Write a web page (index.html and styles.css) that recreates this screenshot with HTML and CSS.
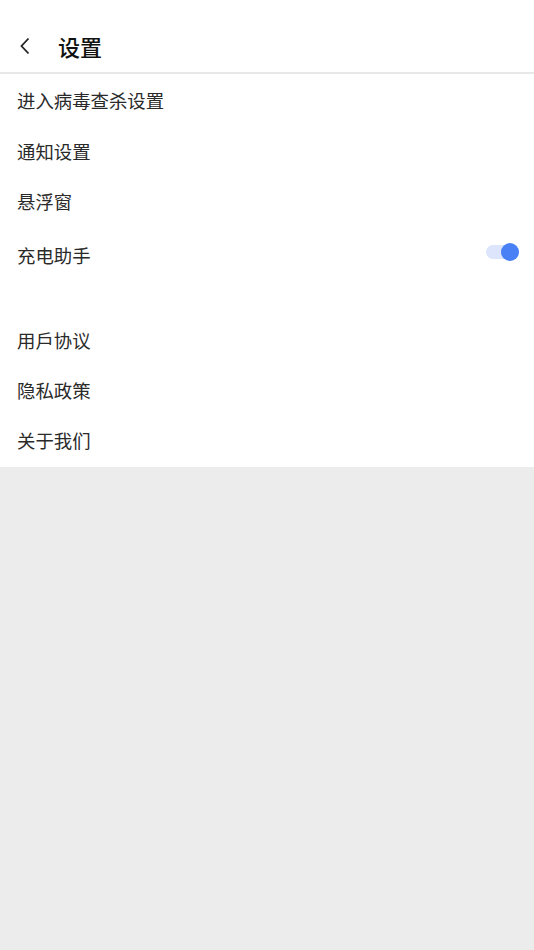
FILE: index.html
```html
<!DOCTYPE html>
<html>
  <head>
    <title>设置</title>
    <meta name="viewport" content="width=device-width, initial-scale=1.0" />
    <link rel="stylesheet" href="styles.css">
  </head>
  <body>
    <div class="page">
      <div class="header">
        <svg class="back" width="14" height="18" viewBox="0 0 14 18">
          <path d="M10.5 1.5 L3.5 9 L10.5 16.5" fill="none" stroke="#222" stroke-width="1.8" />
        </svg>
        <h1 class="title">设置</h1>
      </div>
      <div class="list">
        <div class="item">进入病毒查杀设置</div>
        <div class="item">通知设置</div>
        <div class="item">悬浮窗</div>
        <div class="item item-switch">
          <span>充电助手</span>
          <span class="switch"><span class="knob"></span></span>
        </div>
        <div class="spacer"></div>
        <div class="item">用戶协议</div>
        <div class="item">隐私政策</div>
        <div class="item">关于我们</div>
      </div>
    </div>
  </body>
</html>
```

FILE: styles.css
```css
body {
  margin: 0;
  background: #ececec;
  font-family: "Noto Sans CJK SC", "Noto Sans", sans-serif;
  color: #222;
}
.page {
  background: white;
}
.header {
  height: 74px;
  display: flex;
  align-items: center;
  padding: 20px 0 0 18px;
  box-sizing: border-box;
  border-bottom: 2px solid #e8e8e8;
}
.back {
  margin-right: 26px;
}
.title {
  margin: 0;
  font-size: 22px;
  font-weight: 500;
  color: #111;
}
.list {
  padding-bottom: 2px;
}
.item {
  height: 50px;
  display: flex;
  align-items: center;
  padding: 0 16px 0 17px;
  font-size: 18.4px;
  color: #2a2a2a;
}
.list .item:first-child {
  height: 52px;
}
.item-switch {
  height: 58px;
  justify-content: space-between;
}
.spacer {
  height: 31px;
}
.switch {
  position: relative;
  width: 32px;
  height: 14px;
  margin-bottom: 7px;
  border-radius: 7px;
  background: #dce5fb;
}
.knob {
  position: absolute;
  right: -1px;
  top: -2px;
  width: 18px;
  height: 18px;
  border-radius: 50%;
  background: #4a80f6;
}
```
